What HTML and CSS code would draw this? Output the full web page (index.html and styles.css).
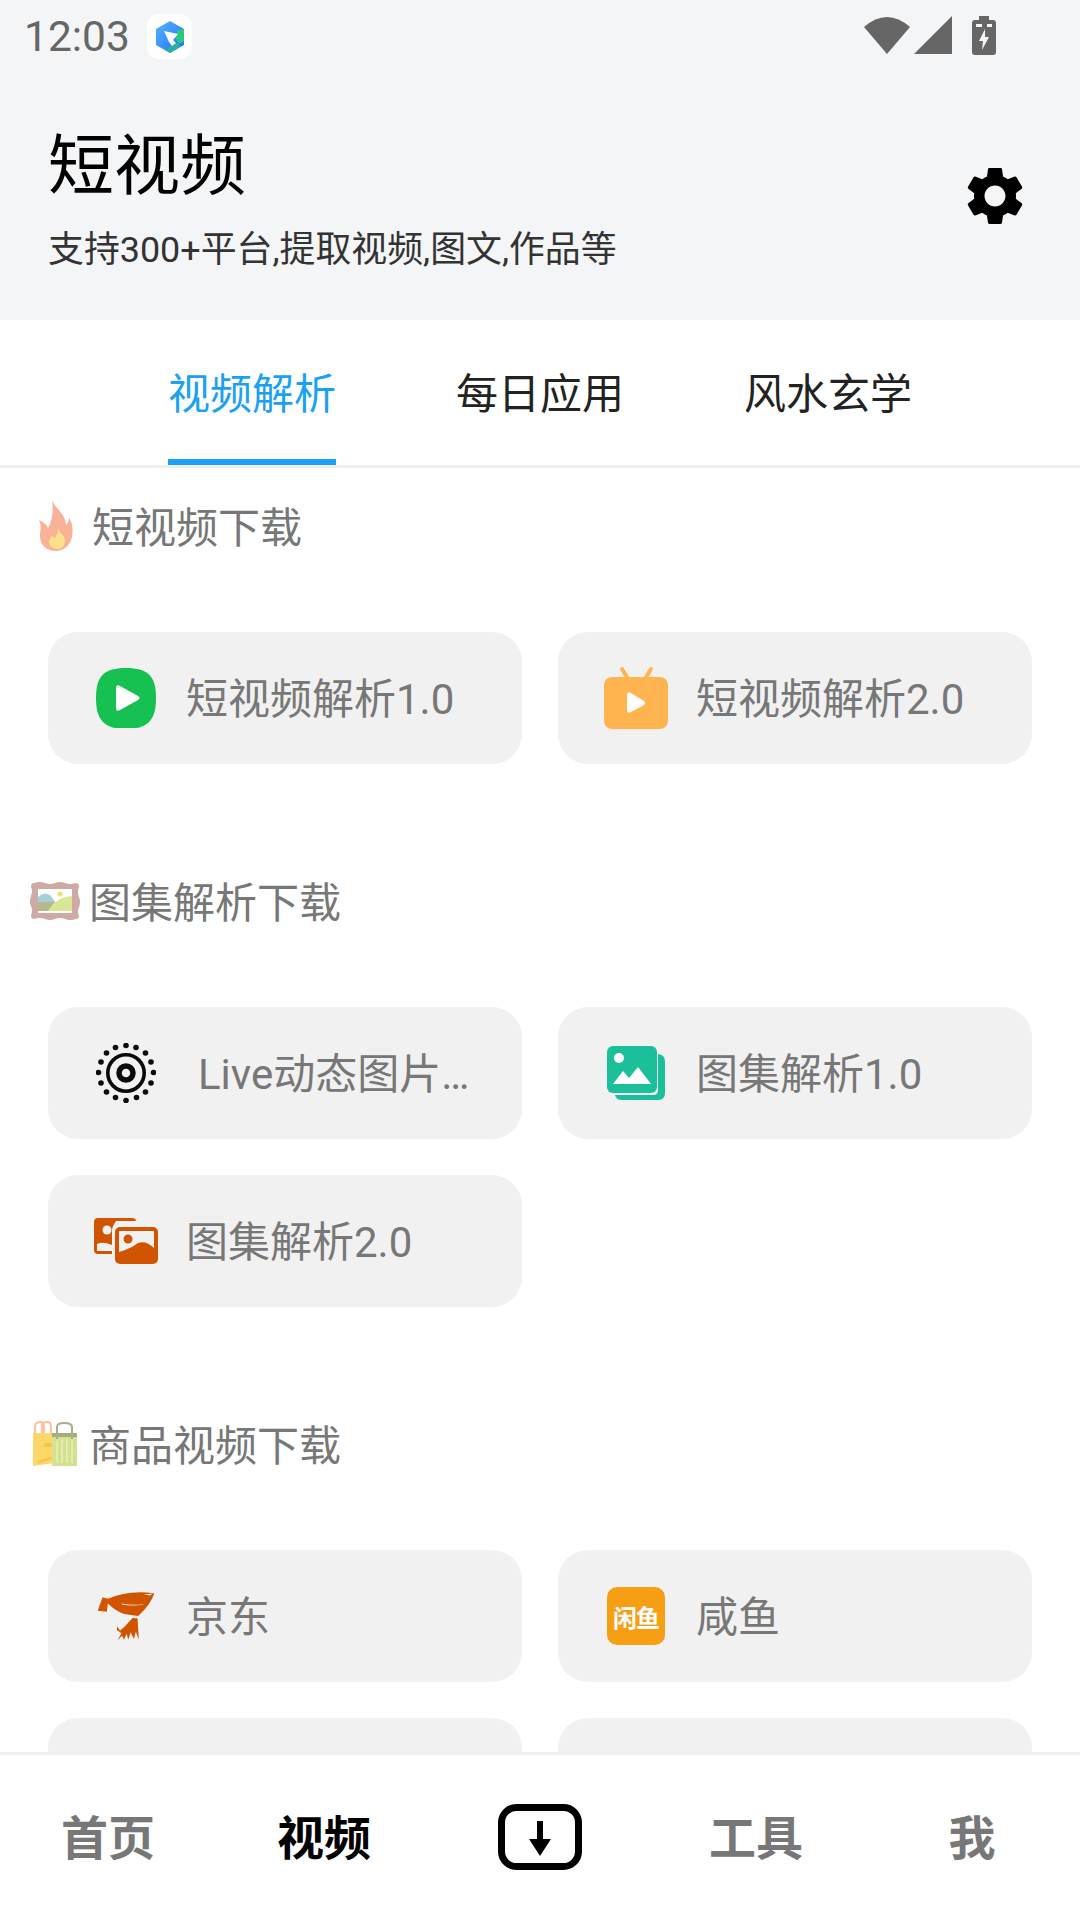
FILE: index.html
```html
<!DOCTYPE html>
<html lang="zh-CN">
<head>
    <meta charset="utf-8">
    <title>短视频</title>
    <link rel="stylesheet" href="styles.css">
</head>
<body>
    <div class="page">
        <div class="status-bar">
            <span class="clock">12:03</span>
            <span class="app-badge">
                <svg width="30" height="32" viewBox="0 0 30 32">
                    <defs>
                        <linearGradient id="hexBlue" x1="0" y1="0" x2="1" y2="1">
                            <stop offset="0" stop-color="#56b4ff"/>
                            <stop offset="1" stop-color="#1c6ff5"/>
                        </linearGradient>
                    </defs>
                    <path d="M15 0 L29 8 V24 L15 32 L1 24 V8 Z" fill="url(#hexBlue)"/>
                    <path d="M29 8 V20 L24 23 L20 16 L23 9 Z" fill="#2fc77f"/>
                    <path d="M11 29.500 L20 21 L26 25 L15 32 Z" fill="#22b39a"/>
                    <path d="M9 10 L23 13 L18 19 L21 22 L17 25 L14 21 Z" fill="#fff"/>
                </svg>
            </span>
            <span class="status-icons">
                <svg width="46" height="38" viewBox="0 0 46 38"><path d="M0 11 Q23 -9 46 11 L23 38 Z" fill="#666"/></svg>
                <svg width="38" height="38" viewBox="0 0 38 38"><path d="M38 0 V38 H0 Z" fill="#666"/></svg>
                <svg class="battery" width="24" height="39" viewBox="0 0 24 39">
                    <path d="M7 0 H17 V4 H21 Q24 4 24 7 V36 Q24 39 21 39 H3 Q0 39 0 36 V7 Q0 4 3 4 H7 Z" fill="#666"/>
                    <rect x="4" y="8" width="6" height="3" fill="#f4f5f7"/>
                    <rect x="15" y="8" width="5" height="3" fill="#f4f5f7"/>
                    <path d="M13 13 L7 25 H11 L10 34 L17 21 H13 Z" fill="#f4f5f7"/>
                </svg>
            </span>
        </div>

        <header class="header">
            <div class="header-text">
                <h1 class="title">短视频</h1>
                <p class="subtitle">支持300+平台,提取视频,图文,作品等</p>
            </div>
            <svg class="gear" width="70" height="70" viewBox="0 0 24 24">
                <path d="M19.14 12.94c.04-.3.06-.61.06-.94 0-.32-.02-.64-.07-.94l2.03-1.58c.18-.14.23-.41.12-.61l-1.92-3.32c-.12-.22-.37-.29-.59-.22l-2.39.96c-.5-.38-1.03-.7-1.62-.94l-.36-2.54c-.04-.24-.24-.41-.48-.41h-3.84c-.24 0-.43.17-.47.41l-.36 2.54c-.59.24-1.13.57-1.62.94l-2.39-.96c-.22-.08-.47 0-.59.22L2.74 8.87c-.12.21-.08.47.12.61l2.03 1.58c-.05.3-.09.63-.09.94s.02.64.07.94l-2.03 1.58c-.18.14-.23.41-.12.61l1.92 3.32c.12.22.37.29.59.22l2.39-.96c.5.38 1.03.7 1.62.94l.36 2.54c.05.24.24.41.48.41h3.84c.24 0 .44-.17.47-.41l.36-2.54c.59-.24 1.13-.56 1.62-.94l2.39.96c.22.08.47 0 .59-.22l1.92-3.32c.12-.22.07-.47-.12-.61l-2.01-1.58zM12 15.600c-1.98 0-3.600-1.620-3.600-3.600s1.620-3.600 3.600-3.600 3.600 1.620 3.600 3.600-1.620 3.600-3.600 3.600z" fill="#000"/>
            </svg>
        </header>

        <nav class="tabs">
            <a class="tab tab-active"><span>视频解析</span></a>
            <a class="tab"><span>每日应用</span></a>
            <a class="tab"><span>风水玄学</span></a>
        </nav>

        <main class="content">
            <section class="section">
                <h2 class="section-title">
                    <svg width="53" height="50" viewBox="0 0 53 50">
                        <path d="M22 0 C28 10 36 14 36 24 C38 22 39 20 39 17 C43 22 43 30 42 36 C40 45 33 50 26 50 C17 50 10 44 10 35 C10 29 12 26 9 19 C14 21 17 24 18 27 C22 20 24 10 22 0 Z" fill="#f8b298"/>
                        <path d="M28 27 C29 32 35 34 35 40 C35 45 31 48 27 48 C23 48 19 45 19 41 C19 38 21 36 22 34 C23 36 24 37 25 37 C27 34 28 31 28 27 Z" fill="#fde08a"/>
                    </svg>
                    <span class="section-name">短视频下载</span>
                </h2>
                <div class="grid">
                    <div class="card">
                        <span class="card-icon">
                            <svg width="60" height="60" viewBox="0 0 60 60">
                                <path d="M30 0 C52 0 60 8 60 30 C60 52 52 61 30 61 C8 61 0 52 0 30 C0 8 8 0 30 0 Z" fill="#16c152"/>
                                <path d="M20 20 Q20 16 24 18 L42 28 Q45 30 42 32 L24 42 Q20 44 20 40 Z" fill="#fff"/>
                            </svg>
                        </span>
                        <span class="card-label">短视频解析1.0</span>
                    </div>
                    <div class="card">
                        <span class="card-icon">
                            <svg width="64" height="64" viewBox="0 0 64 64">
                                <path d="M18 3 L24 13 M47 3 L41 13" stroke="#ffb44f" stroke-width="4" stroke-linecap="round"/>
                                <rect y="11" width="64" height="52" rx="8" fill="#ffb44f"/>
                                <path d="M23 29 Q23 25 27 27 L40 35 Q42 37 40 39 L27 46 Q23 48 23 44 Z" fill="#fff"/>
                            </svg>
                        </span>
                        <span class="card-label">短视频解析2.0</span>
                    </div>
                </div>
            </section>

            <section class="section">
                <h2 class="section-title">
                    <svg width="50" height="40" viewBox="0 0 50 40">
                        <path d="M4 2 Q10 0 15 2 T25 2 T35 2 T46 2 Q49 2 49 6 Q47 11 49 16 T49 26 T49 35 Q49 38 46 38 Q40 40 35 38 T25 38 T15 38 T4 38 Q1 38 1 34 Q3 29 1 25 T1 15 T1 6 Q1 2 4 2 Z" fill="#cdaaa4"/>
                        <rect x="8" y="8" width="34" height="24" fill="#fff"/>
                        <circle cx="30" cy="13" r="2.500" fill="#fdd86a"/>
                        <path d="M8 16 Q14 10 20 14 L26 22 L8 30 Z" fill="#a6d0d6"/>
                        <path d="M8 21 H24 L20 30 H8 Z" fill="#b5b98b"/>
                        <path d="M18 30 Q26 16 42 15 V30 Z" fill="#d9e695"/>
                    </svg>
                    <span class="section-name">图集解析下载</span>
                </h2>
                <div class="grid">
                    <div class="card">
                        <span class="card-icon">
                            <svg class="live-icon" width="60" height="60" viewBox="0 0 60 60">
                                <circle cx="30" cy="30" r="18.200" fill="none" stroke="#0b0b0b" stroke-width="3.600"/>
                                <circle cx="30" cy="30" r="7" fill="none" stroke="#0b0b0b" stroke-width="5.500"/>
                                <g fill="#0b0b0b">
                                    <circle cx="30" cy="2.500" r="2.800"/><circle cx="40" cy="4.500" r="2.800"/><circle cx="49.500" cy="10" r="2.800"/>
                                    <circle cx="55" cy="19" r="2.800"/><circle cx="57.500" cy="29.500" r="2.800"/><circle cx="55" cy="40" r="2.800"/>
                                    <circle cx="49.500" cy="49" r="2.800"/><circle cx="40.500" cy="54.500" r="2.800"/><circle cx="30" cy="57.500" r="2.800"/>
                                    <circle cx="19.500" cy="54.500" r="2.800"/><circle cx="10.500" cy="49" r="2.800"/><circle cx="5" cy="40" r="2.800"/>
                                    <circle cx="2.500" cy="29.500" r="2.800"/><circle cx="5" cy="19" r="2.800"/><circle cx="10.500" cy="10" r="2.800"/>
                                    <circle cx="19.500" cy="4.500" r="2.800"/>
                                </g>
                            </svg>
                        </span>
                        <span class="card-label card-label-wide">Live动态图片…</span>
                    </div>
                    <div class="card">
                        <span class="card-icon">
                            <svg width="58" height="54" viewBox="0 0 58 54">
                                <path d="M8 49 H46 Q51 49 51 44 V8 Q58 9 58 15 V47 Q58 54 51 54 H15 Q9 54 8 49 Z" fill="#1bc09a"/>
                                <rect width="50" height="47" rx="6" fill="#1bc09a"/>
                                <circle cx="12" cy="12" r="5" fill="#fff"/>
                                <path d="M6 38 L16 25 L22 32 L31 21 L44 38 Z" fill="#fff"/>
                            </svg>
                        </span>
                        <span class="card-label">图集解析1.0</span>
                    </div>
                    <div class="card">
                        <span class="card-icon">
                            <svg width="64" height="46" viewBox="0 0 64 46">
                                <path d="M4 0 H38 Q42 0 42 3 H22 Q18 9 18 12 V36 H4 Q0 36 0 32 V4 Q0 0 4 0 Z" fill="#d15400"/>
                                <circle cx="13" cy="12" r="4.500" fill="#f1f1f1"/>
                                <path d="M3 26 Q9 23 18 27 V33 H3 Z" fill="#f1f1f1"/>
                                <rect x="21" y="9" width="43" height="37" rx="5" fill="#d15400"/>
                                <path d="M25 13 H60 V30 Q52 22 44 25 Q36 31 25 34 Z" fill="#f1f1f1"/>
                                <circle cx="34" cy="21" r="4.500" fill="#d15400"/>
                            </svg>
                        </span>
                        <span class="card-label">图集解析2.0</span>
                    </div>
                </div>
            </section>

            <section class="section">
                <h2 class="section-title">
                    <svg width="50" height="46" viewBox="0 0 50 46">
                        <path d="M5 12 V6 Q5 1 10 1 Q14 1 14 6 V12 M12 12 V6 Q12 1 17 1 Q21 1 21 6 V12" fill="none" stroke="#fbbd96" stroke-width="1.800"/>
                        <path d="M3 12 H24 V42 L3 45 Z" fill="#fdd76a"/>
                        <path d="M14 22 H24 V26 H14 Z M8 40 L24 35 V37 L8 43 Z" fill="#f9c14f"/>
                        <rect x="22" y="12" width="25" height="33" fill="#d4e28f"/>
                        <rect x="22" y="12" width="25" height="4" fill="#a5ad7c"/>
                        <path d="M27 20 V6 Q27 2 34 2 Q42 2 42 6 V20" fill="none" stroke="#a8ad90" stroke-width="2"/>
                        <path d="M27 18 V42 M32 18 V42 M37 18 V42 M42 18 V42" stroke="#e6efb9" stroke-width="1.500"/>
                    </svg>
                    <span class="section-name">商品视频下载</span>
                </h2>
                <div class="grid">
                    <div class="card">
                        <span class="card-icon">
                            <svg width="58" height="52" viewBox="290 570 176 156">
                                <path d="M292 632 L307 591 L323 596 Q385 568 464 579 Q452 615 415 648 L372 642 Q345 632 323 610 L320 635 Z" fill="#d15400"/>
                                <path d="M365 610 Q395 616 430 612 L430 614 Q395 618 365 613 Z" fill="#f1f1f1"/>
                                <path d="M432 582 L460 580 L450 586 Z" fill="#f1f1f1"/>
                                <path d="M352 722 L364 700 L350 690 L351 680 L360 692 L372 682 L398 654 L413 655 L417 720 L408 696 L402 718 L392 697 L385 720 L380 702 L372 720 L366 708 Z" fill="#d15400"/>
                            </svg>
                        </span>
                        <span class="card-label">京东</span>
                    </div>
                    <div class="card">
                        <span class="card-icon">
                            <span class="xianyu-logo">闲鱼</span>
                        </span>
                        <span class="card-label">咸鱼</span>
                    </div>
                    <div class="card"></div>
                    <div class="card"></div>
                </div>
            </section>
        </main>

        <footer class="bottom-nav">
            <a class="nav-item">首页</a>
            <a class="nav-item nav-active">视频</a>
            <a class="nav-item nav-icon">
                <svg width="84" height="66" viewBox="0 0 84 66">
                    <rect x="3.500" y="3.500" width="77" height="59" rx="15" fill="none" stroke="#000" stroke-width="7"/>
                    <path d="M39 17 H45 V35 H53 L42 52 L31 35 H39 Z" fill="#000"/>
                </svg>
            </a>
            <a class="nav-item">工具</a>
            <a class="nav-item">我</a>
        </footer>
    </div>
</body>
</html>
```

FILE: styles.css
```css
* {
    box-sizing: border-box;
}
html, body {
    margin: 0;
    padding: 0;
}
body {
    font-family: Roboto, "Noto Sans CJK SC", sans-serif;
    background-color: #fff;
}
.page {
    width: 1080px;
    height: 1920px;
    display: flex;
    flex-direction: column;
    overflow: hidden;
}

/* status bar */
.status-bar {
    height: 70px;
    flex: none;
    display: flex;
    align-items: flex-start;
    padding: 14px 0 0 24px;
    background-color: #f4f5f7;
}
.clock {
    font-size: 42.500px;
    line-height: 46px;
    color: #666;
    width: 123px;
}
.app-badge {
    width: 45px;
    height: 45px;
    border-radius: 12px;
    background-color: #fff;
    display: flex;
    align-items: center;
    justify-content: center;
}
.status-icons {
    margin-left: auto;
    margin-right: 84px;
    display: flex;
    gap: 4px;
    padding-top: 2px;
}
.status-icons .battery {
    margin-left: 16px;
}

/* header */
.header {
    height: 250px;
    flex: none;
    display: flex;
    align-items: center;
    justify-content: space-between;
    padding: 54px 50px 46px 48px;
    background-color: #f4f5f7;
}
.title {
    margin: 3px 0 18px;
    font-size: 66px;
    line-height: 80px;
    font-weight: 400;
    color: #000;
}
.subtitle {
    margin: 0;
    font-size: 35.900px;
    line-height: 50px;
    color: #333;
}
.gear {
    margin-bottom: 6px;
}

/* tabs */
.tabs {
    height: 148px;
    flex: none;
    display: flex;
    justify-content: center;
    background-color: #fff;
    border-bottom: 3px solid #eee;
}
.tab {
    width: 288px;
    display: flex;
    justify-content: center;
    font-size: 42px;
    color: #222;
}
.tab span {
    display: flex;
    align-items: center;
    padding-bottom: 5px;
    border-bottom: 6px solid transparent;
    border-top: 6px solid transparent;
}
.tab-active {
    color: #1aa1f5;
}
.tab-active span {
    border-bottom-color: #1aa1f5;
}

/* sections */
.content {
    flex: 1;
    min-height: 0;
    overflow: hidden;
}
.section {
    margin-top: 107px;
}
.section:first-child {
    margin-top: 28px;
}
.section-title {
    margin: 0 0 76px;
    height: 60px;
    padding-left: 30px;
    display: flex;
    align-items: center;
    gap: 9px;
    font-size: 42px;
    font-weight: 400;
    color: #777;
}
.section-name {
    padding-bottom: 4px;
}
.grid {
    display: grid;
    grid-template-columns: 474px 474px;
    column-gap: 36px;
    row-gap: 36px;
    padding: 0 48px;
}
.card {
    height: 132px;
    display: flex;
    align-items: center;
    padding-left: 46px;
    border-radius: 30px;
    background-color: #f1f1f1;
}
.card-icon {
    width: 64px;
    height: 64px;
    flex: none;
    display: flex;
    align-items: center;
    justify-content: center;
}
.card-label {
    margin-left: 28px;
    padding-bottom: 5px;
    font-size: 42px;
    color: #777;
    white-space: nowrap;
}
.card-label-wide {
    margin-left: 40px;
}
.xianyu-logo {
    width: 58px;
    height: 58px;
    border-radius: 10px;
    background-color: #f79f14;
    color: #fff;
    font-size: 24px;
    font-weight: 700;
    letter-spacing: -1px;
    display: flex;
    align-items: center;
    justify-content: center;
    white-space: nowrap;
}

/* bottom nav */
.bottom-nav {
    height: 168px;
    flex: none;
    display: grid;
    grid-template-columns: repeat(5, 1fr);
    background-color: #fff;
    border-top: 3px solid #f1f1f1;
}
.nav-item {
    display: flex;
    align-items: center;
    justify-content: center;
    padding-bottom: 7px;
    font-size: 47px;
    font-weight: 700;
    color: #777;
}
.nav-active {
    color: #000;
}
.nav-icon {
    padding-bottom: 2px;
}
```
